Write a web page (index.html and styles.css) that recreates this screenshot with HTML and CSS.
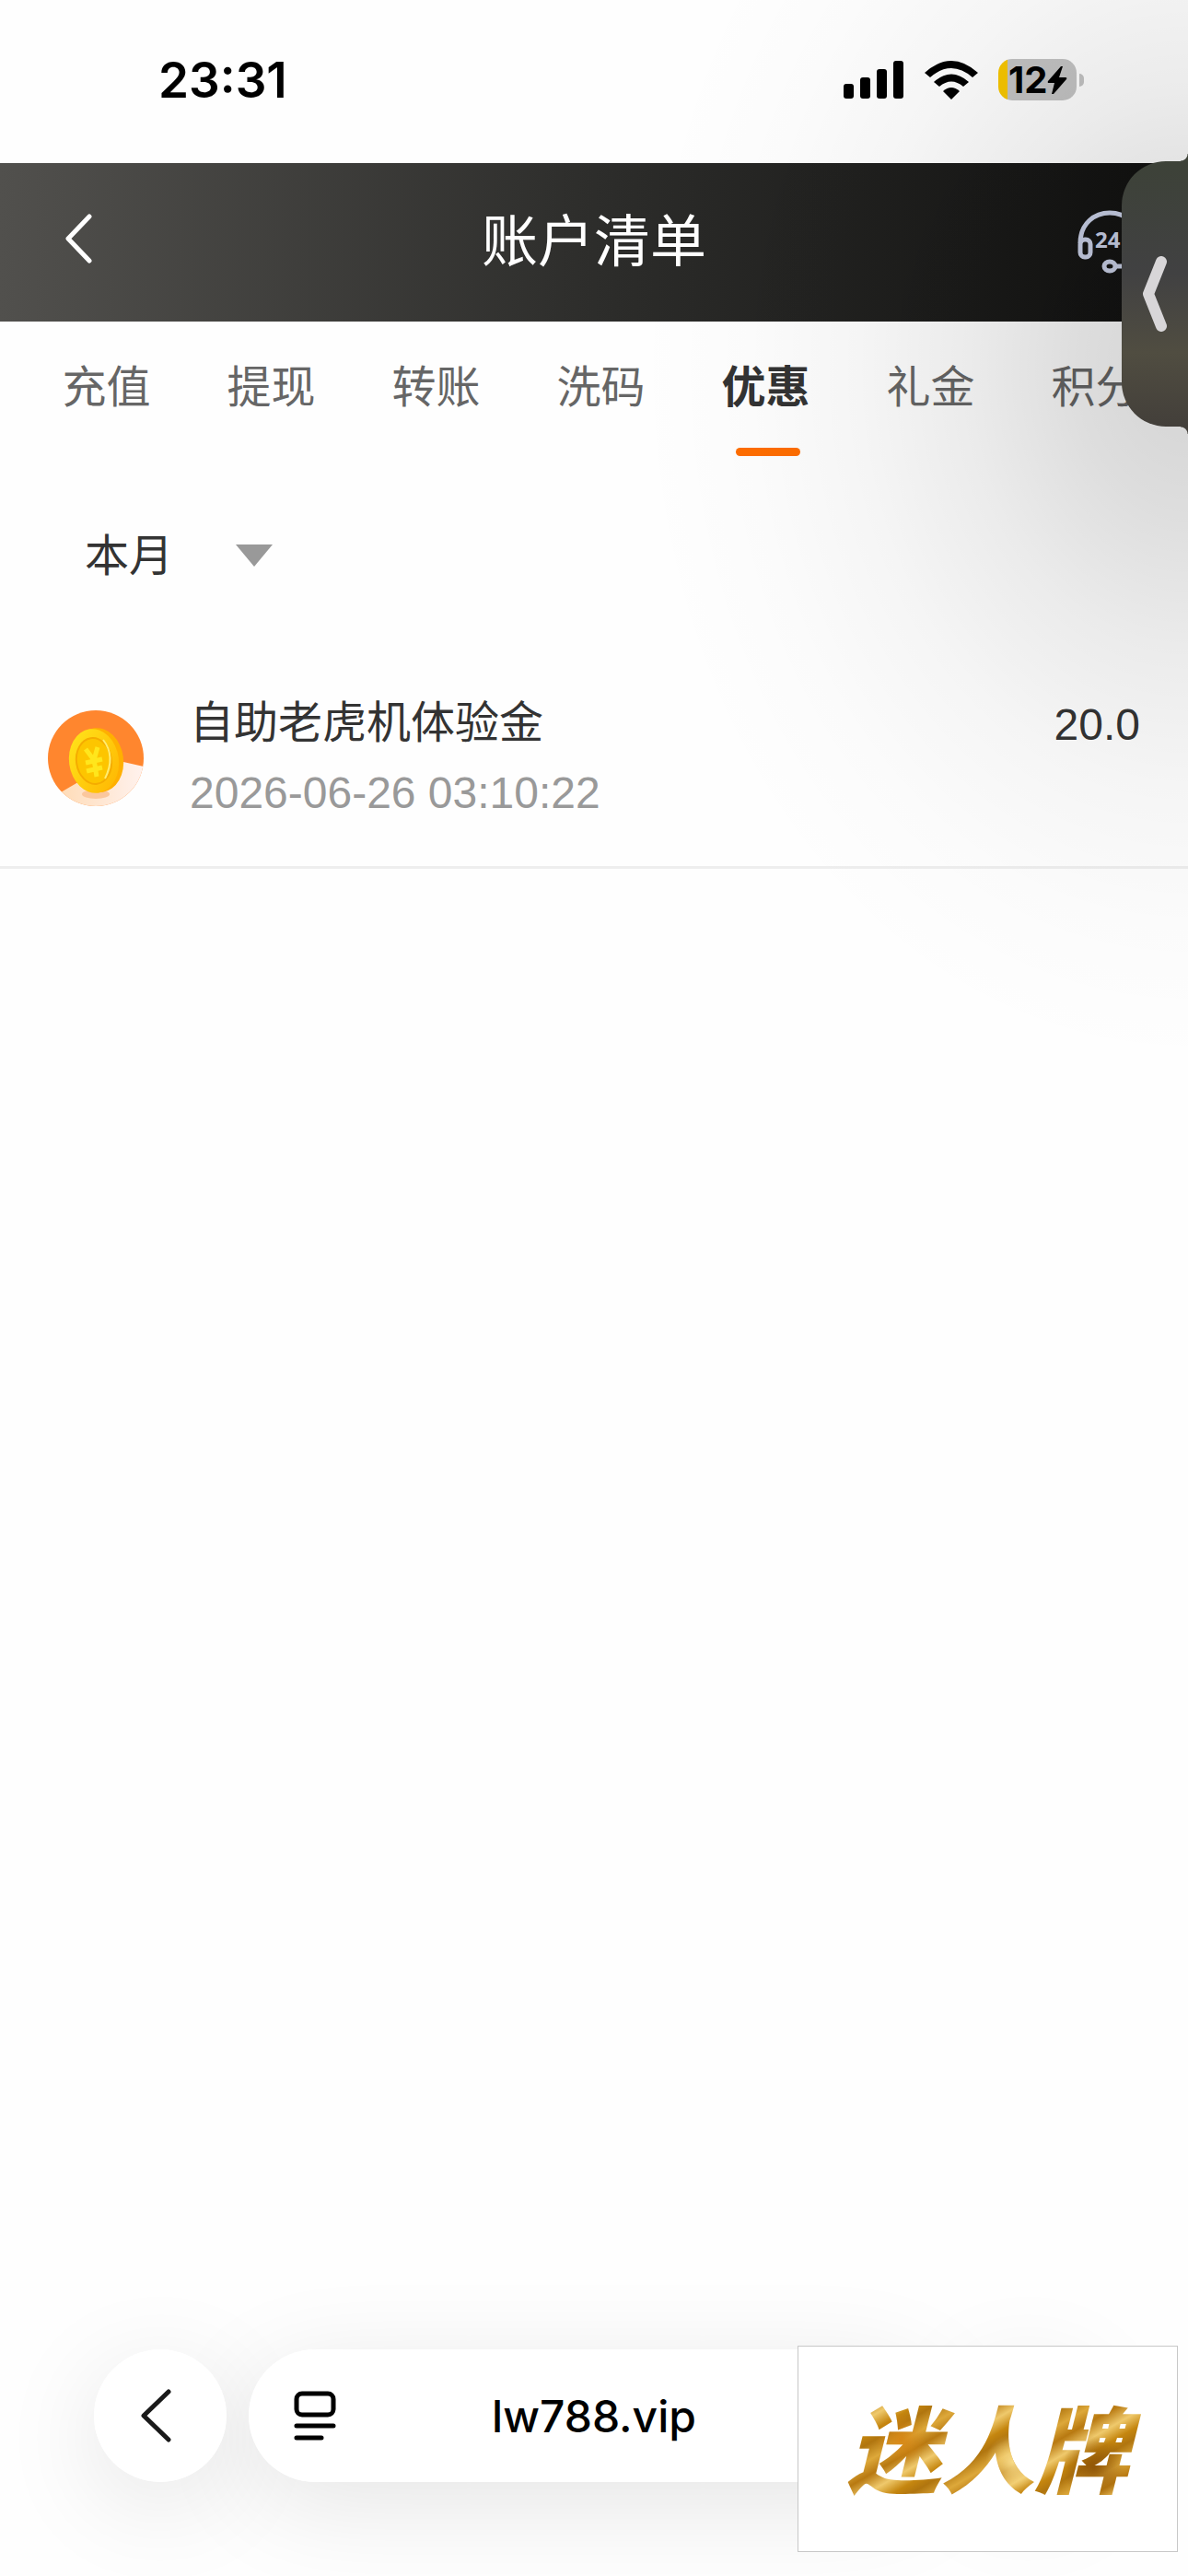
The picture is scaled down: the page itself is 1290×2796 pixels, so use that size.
FILE: index.html
```html
<!DOCTYPE html>
<html lang="zh-CN">
<head>
    <meta charset="utf-8">
    <title>账户清单</title>
    <link rel="stylesheet" href="styles.css">
</head>
<body>
    <div class="page">
        <div class="status-bar">
            <span class="time">23:31</span>
            <div class="status-icons">
                <svg class="signal" width="66" height="42" viewBox="0 0 66 42">
                    <rect x="0" y="25" width="11" height="16" rx="3"/>
                    <rect x="18" y="18" width="11" height="23" rx="3"/>
                    <rect x="36" y="9" width="11" height="32" rx="3"/>
                    <rect x="54" y="0" width="11" height="41" rx="3"/>
                </svg>
                <svg class="wifi" width="58" height="42" viewBox="0 0 58 42">
                    <path d="M0 13 Q29 -13 58 13 L52 18 Q29 -2 6 18Z"/>
                    <path d="M10 23 Q29 6 48 23 L42 28 Q29 17 16 28Z"/>
                    <path d="M20 33 Q29 25 38 33 L29 42Z"/>
                </svg>
                <div class="battery">
                    <span class="battery-level">12</span>
                    <svg width="22" height="30" viewBox="0 0 22 30">
                        <path d="M15 0 L1 16 Q0 18 2 18 H8 L5 30 H7 L21 14 Q22 12 20 12 H13 L17 0Z"/>
                    </svg>
                </div>
            </div>
        </div>

        <header class="header">
            <button class="header-btn back" aria-label="返回">
                <svg width="30" height="54" viewBox="0 0 30 54">
                    <path d="M27 3 L4 27 L27 51" fill="none" stroke="#fff" stroke-width="5" stroke-linecap="round" stroke-linejoin="round"/>
                </svg>
            </button>
            <h1 class="title">账户清单</h1>
            <button class="header-btn" aria-label="客服">
                <svg width="70" height="70" viewBox="0 0 70 70">
                    <g fill="none" stroke="#ccd3ea" stroke-width="5">
                        <path d="M3 36 C3 -8 67 -8 67 36"/>
                        <rect x="3" y="32" width="11" height="19" rx="5"/>
                        <rect x="56" y="32" width="11" height="19" rx="5"/>
                        <ellipse cx="35" cy="61" rx="6" ry="5"/>
                        <path d="M41 61 H52 Q64 61 65 50"/>
                    </g>
                    <text class="service-hours" x="19" y="41">24</text>
                </svg>
            </button>
        </header>

        <nav class="tabs">
            <button class="tab">充值</button>
            <button class="tab">提现</button>
            <button class="tab">转账</button>
            <button class="tab">洗码</button>
            <button class="tab active">优惠</button>
            <button class="tab">礼金</button>
            <button class="tab">积分</button>
        </nav>

        <div class="filter">
            <select class="month" aria-label="月份">
                <option>本月</option>
            </select>
            <span class="arrow"></span>
        </div>

        <ul class="list">
            <li class="item">
                <svg class="coin" width="104" height="104" viewBox="0 0 104 104">
                    <defs>
                        <clipPath id="round"><circle cx="52" cy="52" r="52"/></clipPath>
                        <linearGradient id="sand" x1="0" y1="0" x2="1" y2="0">
                            <stop offset="0" stop-color="#ffdcb8"/>
                            <stop offset="1" stop-color="#fff2ee"/>
                        </linearGradient>
                        <linearGradient id="gold" x1="0" y1="0" x2="1" y2="1">
                            <stop offset="0" stop-color="#ffe61c"/>
                            <stop offset="1" stop-color="#ffb400"/>
                        </linearGradient>
                    </defs>
                    <g clip-path="url(#round)">
                        <rect width="104" height="104" fill="#ff862e"/>
                        <path d="M14 89 Q48 68 82 56 L104 61 V104 H14Z" fill="url(#sand)"/>
                        <ellipse cx="52" cy="91" rx="15" ry="5" fill="#fbc79d"/>
                        <ellipse cx="55" cy="54" rx="27" ry="35" fill="#ffb000" transform="rotate(-8 55 54)"/>
                        <ellipse cx="50" cy="55" rx="27" ry="35" fill="url(#gold)" transform="rotate(-8 50 55)"/>
                        <ellipse cx="50" cy="55" rx="19" ry="25" fill="#fdc500" stroke="#f5ac00" stroke-width="2" transform="rotate(-8 50 55)"/>
                        <path d="M60 32 Q74 50 62 74" fill="none" stroke="#ffec70" stroke-width="2"/>
                        <path d="M41 42 L50 54 L54 40 M41 57 L59 53 M42 66 L59 62 M50 53 L53 72" fill="none" stroke="#ffe61c" stroke-width="5"/>
                    </g>
                </svg>
                <div class="info">
                    <span class="name">自助老虎机体验金</span>
                    <span class="date">2026-06-26 03:10:22</span>
                </div>
                <span class="amount">20.0</span>
            </li>
        </ul>

        <footer class="browser-bar">
            <button class="round-btn" aria-label="后退">
                <svg width="34" height="58" viewBox="0 0 34 58">
                    <path d="M31 3 L4 29 L31 55" fill="none" stroke="#1a1a1a" stroke-width="5" stroke-linecap="round" stroke-linejoin="round"/>
                </svg>
            </button>
            <button class="address">
                <svg class="reader" width="46" height="54" viewBox="0 0 46 54" fill="none" stroke="#000" stroke-width="5" stroke-linecap="round">
                    <rect x="3" y="3" width="40" height="23" rx="6"/>
                    <path d="M3 38 H43 M3 51 H30"/>
                </svg>
                <span class="url">lw788.vip</span>
            </button>
            <button class="round-btn" aria-label="更多"></button>
        </footer>

        <div class="shade"></div>
        <button class="drawer" aria-label="展开">
            <svg width="28" height="82" viewBox="0 0 28 82">
                <path d="M21 6 L7 41 L21 76" fill="none" stroke="#d8d6d8" stroke-width="12" stroke-linecap="round" stroke-linejoin="round"/>
            </svg>
        </button>

        <div class="float-logo"><span class="logo-text">迷人牌</span></div>
    </div>
</body>
</html>
```
FILE: styles.css
```css
* {
    box-sizing: border-box;
}
body {
    margin: 0;
    font-family: "Liberation Sans", "Noto Sans CJK SC", sans-serif;
    font-size: 48px;
    color: #333;
    background: #fefefe;
}
button,
select {
    margin: 0;
    padding: 0;
    border: none;
    background: none;
    font: inherit;
    color: inherit;
    cursor: pointer;
}
svg {
    display: block;
    flex: none;
}
.page {
    position: relative;
    display: flex;
    flex-direction: column;
    min-height: 100vh;
    overflow: hidden;
}

/* status bar */
.status-bar {
    display: flex;
    justify-content: space-between;
    align-items: center;
    height: 177px;
    padding: 0 121px 4px 172px;
    font-family: Inter, sans-serif;
    color: #000;
}
.time {
    font-size: 53px;
    font-weight: 600;
}
.status-icons {
    display: flex;
    align-items: center;
    gap: 22px;
}
.battery {
    position: relative;
    display: flex;
    align-items: center;
    width: 85px;
    height: 45px;
    padding-left: 11px;
    border-radius: 15px;
    background: linear-gradient(90deg, #f7c600 10px, #c3c3c3 10px);
}
.battery::after {
    content: "";
    position: absolute;
    left: 88px;
    top: 16px;
    width: 5px;
    height: 14px;
    border-radius: 0 5px 5px 0;
    background: #c3c3c3;
}
.battery-level {
    font-size: 40px;
    font-weight: 700;
    line-height: 45px;
}

/* header */
.header {
    display: flex;
    justify-content: space-between;
    align-items: center;
    height: 172px;
    padding: 0 50px 0 70px;
    background: linear-gradient(90deg, #51504d, #2d2d2b 50%, #10100f);
}
.header-btn {
    display: flex;
    width: 70px;
}
.header-btn.back {
    width: 50px;
    padding-bottom: 8px;
}
.title {
    margin: 0;
    padding-bottom: 12px;
    font-size: 61px;
    font-weight: 400;
    color: #fff;
}
.service-hours {
    font: 700 24px "Noto Sans", sans-serif;
    fill: #ccd3ea;
}

/* tabs */
.tabs {
    display: flex;
    height: 147px;
    padding-left: 26px;
}
.tab {
    position: relative;
    flex: none;
    width: 179px;
    height: 134px;
    color: #666;
}
.tab.active {
    font-weight: 700;
    color: #333;
}
.tab.active::after {
    content: "";
    position: absolute;
    left: 57px;
    bottom: -12px;
    width: 70px;
    height: 9px;
    border-radius: 5px;
    background: #ff6d00;
}

/* filter */
.filter {
    display: flex;
    align-items: center;
    height: 214px;
    padding-left: 92px;
}
.month {
    appearance: none;
    width: 164px;
    height: 72px;
    outline: none;
}
.arrow {
    border: 20px solid transparent;
    border-top: 24px solid #999;
    border-bottom: none;
}

/* list */
.list {
    margin: 0;
    padding: 0;
    list-style: none;
}
.item {
    display: flex;
    align-items: center;
    gap: 50px;
    height: 233px;
    padding: 0 52px 4px;
    border-bottom: 3px solid #eee;
}
.info {
    flex: 1;
    display: flex;
    flex-direction: column;
}
.name,
.date,
.amount {
    line-height: 76px;
}
.date {
    color: #999;
}
.amount {
    align-self: flex-start;
    margin-top: 39px;
}

/* browser bar */
.browser-bar {
    isolation: isolate;
    display: flex;
    gap: 24px;
    margin-top: auto;
    padding: 0 102px 102px;
}
.round-btn,
.address {
    position: relative;
    display: flex;
    align-items: center;
    height: 144px;
    border-radius: 72px;
    background: #fff;
}
/* shadows sit under all the buttons of the bar */
.round-btn::before,
.address::before {
    content: "";
    position: absolute;
    inset: 0;
    z-index: -1;
    border-radius: 72px;
    box-shadow: 0 24px 110px rgba(0, 0, 0, 0.1);
}
.round-btn {
    justify-content: center;
    width: 144px;
    padding-right: 10px;
}
.address {
    flex: 1;
    padding: 0 49px;
}
.url {
    flex: 1;
    padding-right: 46px;
    font-family: Inter, sans-serif;
    font-size: 48px;
    font-weight: 500;
    text-align: center;
    color: #000;
}

/* wide soft shadow of the drawer handle */
.shade {
    position: absolute;
    top: 0;
    right: 0;
    width: 600px;
    height: 1200px;
    pointer-events: none;
    background: radial-gradient(600px 760px at 100% 400px, rgba(0, 0, 0, 0.17), rgba(0, 0, 0, 0.13) 20%, rgba(0, 0, 0, 0.075) 40%, rgba(0, 0, 0, 0.035) 60%, rgba(0, 0, 0, 0.01) 80%, transparent);
}

/* side drawer handle */
.drawer {
    position: absolute;
    top: 175px;
    right: 0;
    display: flex;
    justify-content: center;
    align-items: center;
    width: 72px;
    height: 288px;
    border-radius: 48px 0 0 48px;
    background: linear-gradient(#3d4238, #414142 42%, #504d41 72%, #433f3a);
}
/* small flares where the handle meets the edge */
.drawer::before,
.drawer::after {
    content: "";
    position: absolute;
    right: 0;
    width: 8px;
    height: 8px;
}
.drawer::before {
    top: -8px;
    background: radial-gradient(circle at 0 0, transparent 7px, #3d4238 8px);
}
.drawer::after {
    bottom: -8px;
    background: radial-gradient(circle at 0 100%, transparent 7px, #433f3a 8px);
}

/* floating logo */
.float-logo {
    position: absolute;
    right: 11px;
    bottom: 26px;
    display: flex;
    justify-content: center;
    align-items: center;
    width: 413px;
    height: 224px;
    padding-bottom: 8px;
    border: 1px solid #c8c8c8;
    background: #fff;
}
.logo-text {
    padding: 0 16px;
    font-family: "Noto Sans CJK SC", sans-serif;
    font-size: 102px;
    font-style: italic;
    font-weight: 900;
    line-height: 120px;
    color: transparent;
    background:
        radial-gradient(circle at 22% 45%, rgba(214, 132, 18, 0.9), transparent 28px),
        radial-gradient(circle at 58% 65%, rgba(255, 230, 150, 0.9), transparent 30px),
        radial-gradient(circle at 84% 70%, rgba(140, 82, 6, 0.9), transparent 34px),
        repeating-linear-gradient(150deg, #b0750f 0, #dda83a 16px, #b87911 30px, #efc96c 46px, #c5860f 60px, #b0750f 70px);
    -webkit-background-clip: text;
    background-clip: text;
}
```
